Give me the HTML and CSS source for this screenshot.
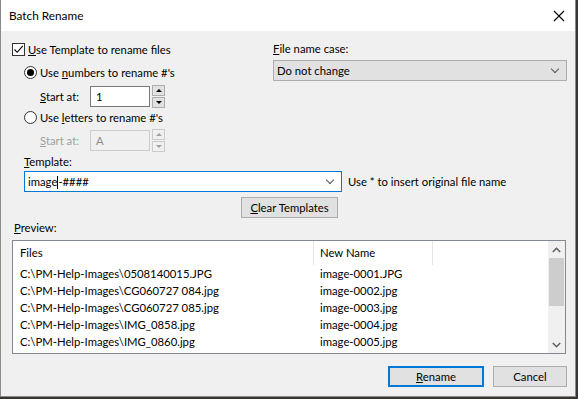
FILE: index.html
```html
<!DOCTYPE html>
<html lang="en">
<head>
  <meta charset="UTF-8">
  <title>Batch Rename</title>
  <link rel="stylesheet" href="styles.css">
</head>
<body>
  <div class="window">
    <div class="titlebar">
      <span class="title">Batch Rename</span>
      <span class="close">
        <svg width="12" height="12" viewBox="0 0 12 12"><path d="M1 1 L11 11 M11 1 L1 11" stroke="#000" stroke-width="1.1" fill="none"/></svg>
      </span>
    </div>

    <div class="content">
      <div class="top">
        <div class="left-col">
          <div class="row check-row">
            <span class="checkbox">
              <svg width="11" height="11" viewBox="0 0 11 11"><path d="M1.5 5.5 L4.2 8.3 L9.8 1.8" stroke="#000" stroke-width="1.1" fill="none"/></svg>
            </span>
            <span><u>U</u>se Template to rename files</span>
          </div>
          <div class="row radio-row">
            <span class="radio checked"></span>
            <span>Use <u>n</u>umbers to rename #'s</span>
          </div>
          <div class="row start-row">
            <span class="start-label"><u>S</u>tart at:</span>
            <span class="textbox">1</span>
            <span class="spinner">
              <span class="spin up"></span>
              <span class="spin down"></span>
            </span>
          </div>
          <div class="row radio-row">
            <span class="radio"></span>
            <span>Use <u>l</u>etters to rename #'s</span>
          </div>
          <div class="row start-row disabled">
            <span class="start-label"><u>S</u>tart at:</span>
            <span class="textbox">A</span>
            <span class="spinner">
              <span class="spin up"></span>
              <span class="spin down"></span>
            </span>
          </div>
          <div class="template-label"><u>T</u>emplate:</div>
        </div>

        <div class="right-col">
          <div class="case-label"><u>F</u>ile name case:</div>
          <div class="dropdown">
            <span>Do not change</span>
            <span class="chevron"></span>
          </div>
        </div>
      </div>

      <div class="template-row">
        <div class="combo">
          <span>image<span class="caret"></span>-####</span>
          <span class="chevron"></span>
        </div>
        <span class="hint">Use * to insert original file name</span>
      </div>

      <div class="clear-row">
        <button class="btn clear-btn"><u>C</u>lear Templates</button>
      </div>

      <div class="preview-label"><u>P</u>review:</div>

      <div class="listview">
        <div class="list-main">
          <div class="list-head">
            <span class="col-files">Files</span>
            <span class="col-new">New Name</span>
            <span class="col-rest"></span>
          </div>
          <div class="list-row"><span class="col-files">C:\PM-Help-Images\0508140015.JPG</span><span class="col-new">image-0001.JPG</span></div>
          <div class="list-row"><span class="col-files">C:\PM-Help-Images\CG060727 084.jpg</span><span class="col-new">image-0002.jpg</span></div>
          <div class="list-row"><span class="col-files">C:\PM-Help-Images\CG060727 085.jpg</span><span class="col-new">image-0003.jpg</span></div>
          <div class="list-row"><span class="col-files">C:\PM-Help-Images\IMG_0858.jpg</span><span class="col-new">image-0004.jpg</span></div>
          <div class="list-row"><span class="col-files">C:\PM-Help-Images\IMG_0860.jpg</span><span class="col-new">image-0005.jpg</span></div>
        </div>
        <div class="scrollbar">
          <span class="arrow">
            <svg width="9" height="6" viewBox="0 0 9 6"><path d="M0.8 5 L4.5 1.3 L8.2 5" stroke="#606060" stroke-width="1.6" fill="none"/></svg>
          </span>
          <span class="thumb"></span>
          <span class="track"></span>
          <span class="arrow">
            <svg width="9" height="6" viewBox="0 0 9 6"><path d="M0.8 1 L4.5 4.7 L8.2 1" stroke="#606060" stroke-width="1.6" fill="none"/></svg>
          </span>
        </div>
      </div>

      <div class="buttons">
        <button class="btn default"><u>R</u>ename</button>
        <button class="btn cancel">Cancel</button>
      </div>
    </div>
  </div>
</body>
</html>
```

FILE: styles.css
```css
html, body { margin: 0; padding: 0; background: #3a3532; }
body { font-family: 'Lato', 'Liberation Sans', sans-serif; font-size: 11.3px; color: #000; }
u { text-decoration: underline; text-underline-offset: 1px; }

.window { width: 574px; height: 396px; background: #f0f0f0; border: 1px solid #8a8a8a; border-width: 0 1px 1px 1px; }
.titlebar { height: 31px; background: #fff; display: flex; align-items: center; justify-content: space-between; padding: 0 0 0 8px; }
.title { font-size: 11.8px; }
.close { width: 24px; display: flex; justify-content: center; margin-right: 4px; }

.content { padding: 9px 8px 0 11px; }
.top { display: flex; }
.left-col { width: 261px; flex: none; }
.right-col { flex: 1; }

.row { display: flex; align-items: center; }
.check-row { height: 18px; gap: 3px; }
.checkbox { width: 11px; height: 11px; border: 1px solid #333; background: #fff; display: flex; }
.radio-row { height: 18px; gap: 3px; padding-left: 12px; }
.radio { width: 11px; height: 11px; border: 1px solid #333; border-radius: 50%; background: #fff; position: relative; }
.radio.checked::after { content: ""; position: absolute; left: 2px; top: 2px; width: 7px; height: 7px; border-radius: 50%; background: #000; }
.row + .radio-row { margin-top: 1px; }
.check-row + .radio-row { margin-top: 5px; }

.start-row { height: 21px; padding-left: 28px; margin-top: 5px; }
.start-row.disabled { margin-top: 4px; }
.start-label { width: 50px; }
.textbox { width: 53px; height: 19px; border: 1px solid #7a7a7a; background: #fff; padding-left: 5px; line-height: 19px; }
.spinner { display: flex; flex-direction: column; margin-left: 2px; gap: 1px; }
.spin { width: 11px; height: 9px; border: 1px solid #adadad; background: #e1e1e1; position: relative; }
.spin.up::after { content: ""; position: absolute; left: 3px; top: 3px; border: 3px solid transparent; border-top: 0; border-bottom: 3px solid #000; }
.spin.down::after { content: ""; position: absolute; left: 3px; top: 3px; border: 3px solid transparent; border-bottom: 0; border-top: 3px solid #000; }
.disabled { color: #a0a0a0; }
.disabled .textbox { border-color: #ccc; background: #f0f0f0; color: #8c8c8c; }
.disabled .spin { border-color: #ccc; background: #f0f0f0; }
.disabled .spin.up::after { border-bottom-color: #a0a0a0; }
.disabled .spin.down::after { border-top-color: #a0a0a0; }

.template-label { padding-left: 12px; height: 18px; line-height: 18px; margin-top: 2px; }
.case-label { height: 18px; line-height: 18px; }
.dropdown { width: 281px; height: 19px; margin-top: 2px; border: 1px solid #adadad; background: #e1e1e1; display: flex; align-items: center; justify-content: space-between; padding: 0 8px 0 3px; }
.chevron { width: 5px; height: 5px; border-right: 1px solid #555; border-bottom: 1px solid #555; transform: rotate(45deg); margin-top: -4px; }

.template-row { display: flex; align-items: center; margin-top: 0; padding-left: 12px; }
.combo { width: 305px; height: 19px; border: 1px solid #0078d7; background: #fff; display: flex; align-items: center; justify-content: space-between; padding: 0 8px 0 3px; }
.caret { display: inline-block; width: 1px; height: 13px; background: #000; vertical-align: -3px; }
.hint { margin-left: 6px; }

.clear-row { display: flex; padding-left: 229px; margin-top: 5px; }
.btn { font-family: inherit; font-size: 11.3px; color: #000; background: #e1e1e1; border: 1px solid #adadad; height: 21px; padding: 0; margin: 0; }
.clear-btn { width: 97px; }

.preview-label { height: 18px; line-height: 18px; padding-left: 2px; margin-top: 1px; }
.listview { width: 552px; height: 112px; border: 1px solid #828790; background: #fff; display: flex; margin-top: 3px; }
.list-main { flex: 1; }
.list-head { display: flex; height: 24px; align-items: center; }
.list-head span { height: 24px; line-height: 24px; }
.col-files { width: 301px; padding-left: 7px; box-sizing: border-box; }
.col-new { width: 119px; padding-left: 6px; box-sizing: border-box; }
.list-head .col-files, .list-head .col-new { border-right: 1px solid #e5e5e5; }
.list-row { display: flex; height: 17px; line-height: 17px; }
.scrollbar { width: 17px; background: #f0f0f0; display: flex; flex-direction: column; align-items: center; }
.arrow { height: 17px; display: flex; align-items: center; justify-content: center; }
.thumb { width: 15px; height: 48px; background: #cdcdcd; }
.track { flex: 1; }

.buttons { display: flex; justify-content: flex-end; gap: 9px; margin-top: 12px; width: 555px; }
.btn.default { width: 96px; border: 2px solid #0078d7; }
.btn.cancel { width: 74px; }
```
